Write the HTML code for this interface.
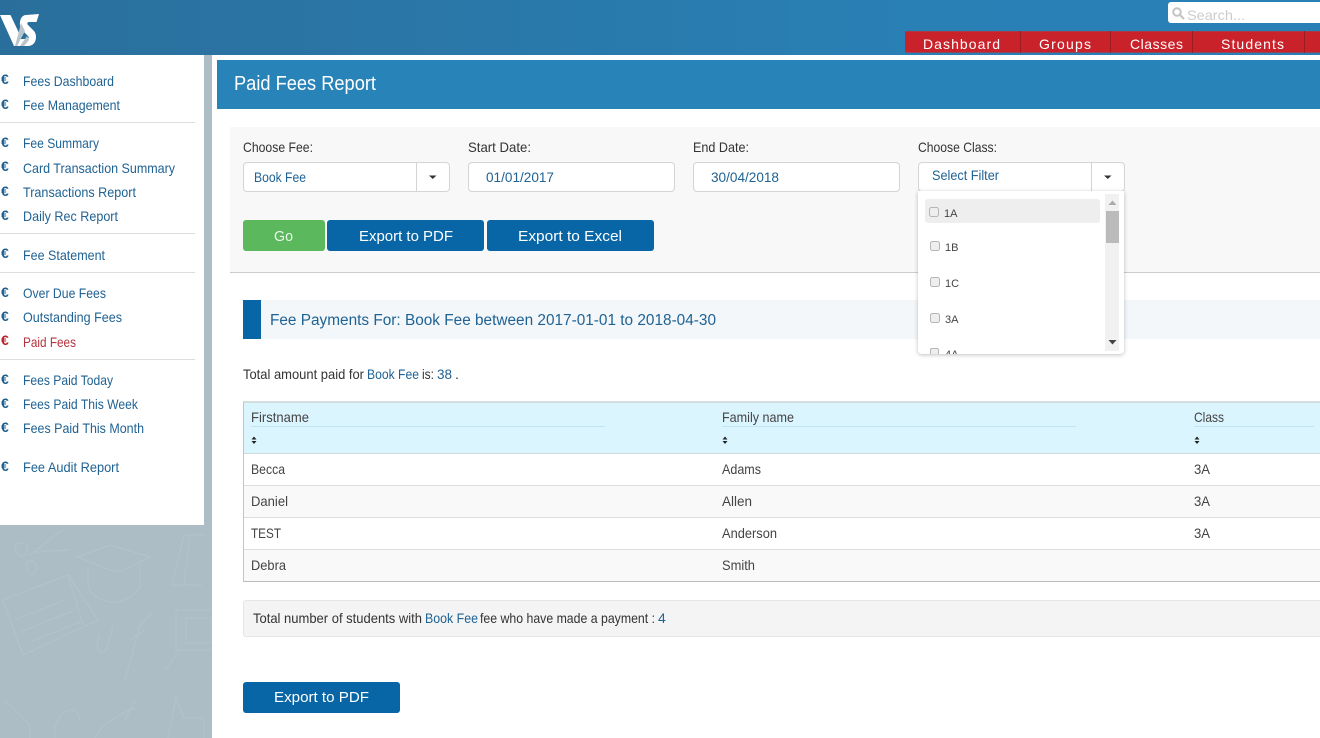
<!DOCTYPE html>
<html><head><meta charset="utf-8"><title>Paid Fees Report</title>
<style>
html,body{margin:0;padding:0;width:1320px;height:738px;overflow:hidden;background:#fff}
.a{position:absolute;box-sizing:border-box}
svg{position:absolute;left:0;top:0}
text{font-family:"Liberation Sans",sans-serif;font-size:14px;fill:#444}
.l{fill:#1f6293}.w{fill:#fff}
.e{fill:#1d5f8f;font-weight:bold;font-size:14px}
.ctl{background:#fff;border:1px solid #d4d4d4;border-radius:4px;top:162px;height:30px;width:207px}
.btn{top:220px;height:31px;background:#0866a6;border-radius:3px}
</style></head><body>
<div class="a" style="left:0;top:0;width:1320px;height:55px;background:linear-gradient(90deg,#2a6f9c,#2980b5 70%,#2980b7)"></div>
<div class="a" style="left:1168px;top:2px;width:152px;height:21px;background:#fff;border-radius:3px 0 0 3px"></div>
<div class="a" style="left:905px;top:31px;width:415px;height:22px;background:#c9222a;border-top:1px solid #a83a48;border-bottom:1px solid #8c4a60"></div>
<div class="a" style="left:1020px;top:31px;width:1px;height:22px;background:#9c1c24"></div>
<div class="a" style="left:1110px;top:31px;width:1px;height:22px;background:#9c1c24"></div>
<div class="a" style="left:1192px;top:31px;width:1px;height:22px;background:#9c1c24"></div>
<div class="a" style="left:1304px;top:31px;width:1px;height:22px;background:#9c1c24"></div>
<div class="a" style="left:0;top:55px;width:212px;height:683px;background:#adbdc6"></div>
<div class="a" style="left:0;top:55px;width:204px;height:470px;background:#fff"></div>
<div class="a" style="left:217px;top:60px;width:1103px;height:49px;background:#2783b8"></div>
<div class="a" style="left:0;top:122px;width:195px;height:1px;background:#ddd"></div>
<div class="a" style="left:0;top:233px;width:195px;height:1px;background:#ddd"></div>
<div class="a" style="left:0;top:272px;width:195px;height:1px;background:#ddd"></div>
<div class="a" style="left:0;top:359px;width:195px;height:1px;background:#ddd"></div>
<div class="a" style="left:230px;top:127px;width:1090px;height:146px;background:#f8f8f8;border-bottom:1px solid #ccc"></div>
<div class="a ctl" style="left:243px"></div>
<div class="a" style="left:416px;top:162px;width:1px;height:30px;background:#d4d4d4"></div>
<div class="a ctl" style="left:468px"></div>
<div class="a ctl" style="left:693px"></div>
<div class="a ctl" style="left:918px"></div>
<div class="a" style="left:1091px;top:162px;width:1px;height:30px;background:#d4d4d4"></div>
<div class="a btn" style="left:243px;width:82px;background:#5cb85c"></div>
<div class="a btn" style="left:327px;width:157px"></div>
<div class="a btn" style="left:487px;width:167px"></div>
<div class="a" style="left:243px;top:300px;width:1077px;height:39px;background:#f3f7fa"></div>
<div class="a" style="left:243px;top:300px;width:18px;height:39px;background:#0866a6"></div>
<div class="a" style="left:243px;top:401px;width:1077px;height:181px;border-style:solid;border-width:2px 0 1px 1px;border-color:#d4dde0 #bbb #bbb #c4c4c4"></div>
<div class="a" style="left:244px;top:403px;width:1076px;height:50px;background:#dbf5ff"></div>
<div class="a" style="left:244px;top:453px;width:1076px;height:1px;background:#d0dbe0"></div>
<div class="a" style="left:244px;top:485px;width:1076px;height:1px;background:#ddd"></div>
<div class="a" style="left:244px;top:486px;width:1076px;height:31px;background:#f9f9f9"></div>
<div class="a" style="left:244px;top:517px;width:1076px;height:1px;background:#ddd"></div>
<div class="a" style="left:244px;top:549px;width:1076px;height:1px;background:#ddd"></div>
<div class="a" style="left:244px;top:550px;width:1076px;height:31px;background:#f9f9f9"></div>
<div class="a" style="left:251px;top:426px;width:354px;height:1px;background:#c0e4f2"></div>
<div class="a" style="left:722px;top:426px;width:354px;height:1px;background:#c0e4f2"></div>
<div class="a" style="left:1194px;top:426px;width:120px;height:1px;background:#c0e4f2"></div>
<div class="a" style="left:243px;top:600px;width:1077px;height:37px;background:#f4f4f4;border:1px solid #e6e6e6;border-right:0;border-radius:3px 0 0 3px"></div>
<div class="a btn" style="left:243px;top:682px;width:157px"></div>
<div class="a" style="left:918px;top:191px;width:206px;height:163px;background:#fff;border-radius:0 0 4px 4px;box-shadow:0 1px 4px rgba(0,0,0,.25);overflow:hidden">
 <div class="a" style="left:7px;top:8px;width:175px;height:24px;background:#eee;border-radius:3px"></div>
 <div class="a" style="left:187px;top:3px;width:14px;height:157px;background:#f1f1f1"></div>
 <div class="a" style="left:188px;top:20px;width:13px;height:32px;background:#bbb"></div>
</div>
<svg style="left:0;top:525px" width="212" height="213" viewBox="0 525 212 213">
<g fill="none" stroke="#b7c6cd" stroke-width="1.2" opacity=".6">
<path d="M15 545c8-5 15 0 12 7s-12 5-12-7zM27 562c8-3 12 3 9 9s-12 2-9-9zM30 555l32-25M34 552l35-2"/>
<path d="M78 557l32-12 40 12-30 15-10-2zM88 567v20c10 20 40 20 52 0v-25"/>
<path d="M172 585l12-50h22M190 535l-6 50M170 585h32"/>
<path d="M3 600l65-25 30 45-75 35zM68 575l15 50M15 620l50-20M20 632l55-22M30 642l50-20"/>
<path d="M100 635c-8 15 5 25 8 10l5-20M125 680l15-55 12-12M130 640l15-10"/>
<path d="M176 610h36M176 610v40h36M186 618h26v25h-26zM165 670l15-20h32"/>
<path d="M5 700l25 25v13M55 738c-5-25 25-40 25-15M95 738c10-20 40-30 40-30M135 700l-10 20M168 738l8-40 8 20h20v20"/>
</g></svg>
<svg width="1320" height="738" viewBox="0 0 1320 738">
<!-- logo -->
<path d="M0 15h10.500L19 33l-3 13h-2z" fill="#fff"/>
<path d="M39 14l-2.500 8H29c-2 0-2 2-1 3l6 6c4 5 2 15-6 15H17l3-7h7c2 0 2-2 1-3l-6-6c-4-5-2-15 4-15z" fill="#fff"/>
<path d="M21 23l4 8-8 15h-2l3-11zM27 36l2 4-5 6h-4z" fill="#b9c4cc"/>
<!-- search -->
<g fill="none" stroke="#c4c4c4" stroke-width="2"><circle cx="1177" cy="12" r="3.800"/><path d="M1180 15l4 4"/></g>
<text x="1187" y="20" textLength="58" lengthAdjust="spacingAndGlyphs" style="fill:#ccc">Search...</text>
<!-- nav -->
<text class="w" x="923" y="49" textLength="77" lengthAdjust="spacing">Dashboard</text>
<text class="w" x="1039" y="49" textLength="52" lengthAdjust="spacing">Groups</text>
<text class="w" x="1130" y="49" textLength="53" lengthAdjust="spacing">Classes</text>
<text class="w" x="1221" y="49" textLength="63" lengthAdjust="spacing">Students</text>
<!-- sidebar -->
<text class="l" x="23" y="86" textLength="91" lengthAdjust="spacingAndGlyphs">Fees Dashboard</text>
<text class="l" x="23" y="110" textLength="97" lengthAdjust="spacingAndGlyphs">Fee Management</text>
<text class="l" x="23" y="148" textLength="76" lengthAdjust="spacingAndGlyphs">Fee Summary</text>
<text class="l" x="23" y="173" textLength="152" lengthAdjust="spacingAndGlyphs">Card Transaction Summary</text>
<text class="l" x="23" y="197" textLength="113" lengthAdjust="spacingAndGlyphs">Transactions Report</text>
<text class="l" x="23" y="221" textLength="95" lengthAdjust="spacingAndGlyphs">Daily Rec Report</text>
<text class="l" x="23" y="260" textLength="82" lengthAdjust="spacingAndGlyphs">Fee Statement</text>
<text class="l" x="23" y="298" textLength="83" lengthAdjust="spacingAndGlyphs">Over Due Fees</text>
<text class="l" x="23" y="322" textLength="99" lengthAdjust="spacingAndGlyphs">Outstanding Fees</text>
<text x="23" y="347" textLength="53" lengthAdjust="spacingAndGlyphs" style="fill:#b5333d">Paid Fees</text>
<text class="l" x="23" y="385" textLength="90" lengthAdjust="spacingAndGlyphs">Fees Paid Today</text>
<text class="l" x="23" y="409" textLength="115" lengthAdjust="spacingAndGlyphs">Fees Paid This Week</text>
<text class="l" x="23" y="433" textLength="121" lengthAdjust="spacingAndGlyphs">Fees Paid This Month</text>
<text class="l" x="23" y="472" textLength="96" lengthAdjust="spacingAndGlyphs">Fee Audit Report</text>
<text class="e" x="1" y="84">€</text>
<text class="e" x="1" y="109">€</text>
<text class="e" x="1" y="147">€</text>
<text class="e" x="1" y="171">€</text>
<text class="e" x="1" y="196">€</text>
<text class="e" x="1" y="220">€</text>
<text class="e" x="1" y="258">€</text>
<text class="e" x="1" y="297">€</text>
<text class="e" x="1" y="321">€</text>
<text class="e" x="1" y="345" style="fill:#b5222c">€</text>
<text class="e" x="1" y="384">€</text>
<text class="e" x="1" y="408">€</text>
<text class="e" x="1" y="432">€</text>
<text class="e" x="1" y="471">€</text>
<!-- title -->
<text class="w" x="234" y="90" textLength="142" lengthAdjust="spacingAndGlyphs" style="font-size:20px">Paid Fees Report</text>
<!-- labels -->
<text x="243" y="152" textLength="70" lengthAdjust="spacingAndGlyphs" style="fill:#333">Choose Fee:</text>
<text x="468" y="152" textLength="63" lengthAdjust="spacingAndGlyphs" style="fill:#333">Start Date:</text>
<text x="693" y="152" textLength="56" lengthAdjust="spacingAndGlyphs" style="fill:#333">End Date:</text>
<text x="918" y="152" textLength="79" lengthAdjust="spacingAndGlyphs" style="fill:#333">Choose Class:</text>
<text class="l" x="254" y="182" textLength="52" lengthAdjust="spacingAndGlyphs">Book Fee</text>
<text class="l" x="486" y="182" textLength="68" lengthAdjust="spacingAndGlyphs">01/01/2017</text>
<text class="l" x="711" y="182" textLength="68" lengthAdjust="spacingAndGlyphs">30/04/2018</text>
<text class="l" x="932" y="180" textLength="67" lengthAdjust="spacingAndGlyphs">Select Filter</text>
<path d="M429 175.500h7.500l-3.750 3.500zM1104 175.500h7.500l-3.750 3.500z" fill="#333"/>
<!-- buttons -->
<text x="274" y="241" textLength="19" lengthAdjust="spacingAndGlyphs" style="font-size:15px;fill:#eef7ee">Go</text>
<text class="w" x="359" y="241" textLength="94" lengthAdjust="spacingAndGlyphs" style="font-size:15px">Export to PDF</text>
<text class="w" x="518" y="241" textLength="104" lengthAdjust="spacingAndGlyphs" style="font-size:15px">Export to Excel</text>
<text class="l" x="270" y="325" textLength="446" lengthAdjust="spacingAndGlyphs" style="font-size:15.500px">Fee Payments For: Book Fee between 2017-01-01 to 2018-04-30</text>
<!-- total -->
<text x="243" y="379" textLength="121" lengthAdjust="spacingAndGlyphs" style="fill:#333">Total amount paid for</text>
<text class="l" x="367" y="379" textLength="52" lengthAdjust="spacingAndGlyphs">Book Fee</text>
<text x="422" y="379" textLength="12" lengthAdjust="spacingAndGlyphs" style="fill:#333">is:</text>
<text class="l" x="437" y="379" textLength="15" lengthAdjust="spacingAndGlyphs">38</text>
<text x="455" y="379" style="fill:#333">.</text>
<!-- table -->
<text x="251" y="422" textLength="58" lengthAdjust="spacingAndGlyphs">Firstname</text>
<text x="722" y="422" textLength="72" lengthAdjust="spacingAndGlyphs">Family name</text>
<text x="1194" y="422" textLength="30" lengthAdjust="spacingAndGlyphs">Class</text>
<path d="M251.500 439.500h5l-2.500-3zM251.500 441h5l-2.500 3zM722.500 439.500h5l-2.500-3zM722.500 441h5l-2.500 3zM1194.500 439.500h5l-2.500-3zM1194.500 441h5l-2.500 3z" fill="#222"/>
<text x="251" y="474" textLength="34" lengthAdjust="spacingAndGlyphs">Becca</text>
<text x="722" y="474" textLength="39" lengthAdjust="spacingAndGlyphs">Adams</text>
<text x="1194" y="474" textLength="16" lengthAdjust="spacingAndGlyphs">3A</text>
<text x="251" y="506" textLength="37" lengthAdjust="spacingAndGlyphs">Daniel</text>
<text x="722" y="506" textLength="30" lengthAdjust="spacingAndGlyphs">Allen</text>
<text x="1194" y="506" textLength="16" lengthAdjust="spacingAndGlyphs">3A</text>
<text x="251" y="538" textLength="30" lengthAdjust="spacingAndGlyphs">TEST</text>
<text x="722" y="538" textLength="55" lengthAdjust="spacingAndGlyphs">Anderson</text>
<text x="1194" y="538" textLength="16" lengthAdjust="spacingAndGlyphs">3A</text>
<text x="251" y="570" textLength="35" lengthAdjust="spacingAndGlyphs">Debra</text>
<text x="722" y="570" textLength="33" lengthAdjust="spacingAndGlyphs">Smith</text>
<!-- summary -->
<text x="253" y="623" textLength="169" lengthAdjust="spacingAndGlyphs" style="fill:#333">Total number of students with</text>
<text class="l" x="425" y="623" textLength="53" lengthAdjust="spacingAndGlyphs">Book Fee</text>
<text x="480" y="623" textLength="175" lengthAdjust="spacingAndGlyphs" style="fill:#333">fee who have made a payment :</text>
<text class="l" x="658" y="623">4</text>
<text class="w" x="274" y="702" textLength="95" lengthAdjust="spacingAndGlyphs" style="font-size:15px">Export to PDF</text>
<!-- dropdown content -->
<g fill="#eee" stroke="#b5b5b5"><rect x="929.500" y="207.500" width="9" height="9" rx="2"/><rect x="930.500" y="241.500" width="9" height="9" rx="2"/><rect x="930.500" y="277.500" width="9" height="9" rx="2"/><rect x="930.500" y="313.500" width="9" height="9" rx="2"/></g>
<text x="944" y="217" style="font-size:11px">1A</text>
<text x="945" y="251" style="font-size:11px">1B</text>
<text x="945" y="287" style="font-size:11px">1C</text>
<text x="945" y="323" style="font-size:11px">3A</text>
<path d="M1108.500 205h8l-4-4.500z" fill="#aaa"/><path d="M1108.500 340h8l-4 4.500z" fill="#444"/>
</svg>
<div class="a" style="left:930px;top:348px;width:180px;height:6px;overflow:hidden"><div class="a" style="left:0;top:0;width:9px;height:9px;background:#eee;border:1px solid #b5b5b5;border-radius:2px"></div><div class="a" style="left:15px;top:1px;font:11px 'Liberation Sans',sans-serif;color:#444;line-height:12px">4A</div></div>
</body></html>
